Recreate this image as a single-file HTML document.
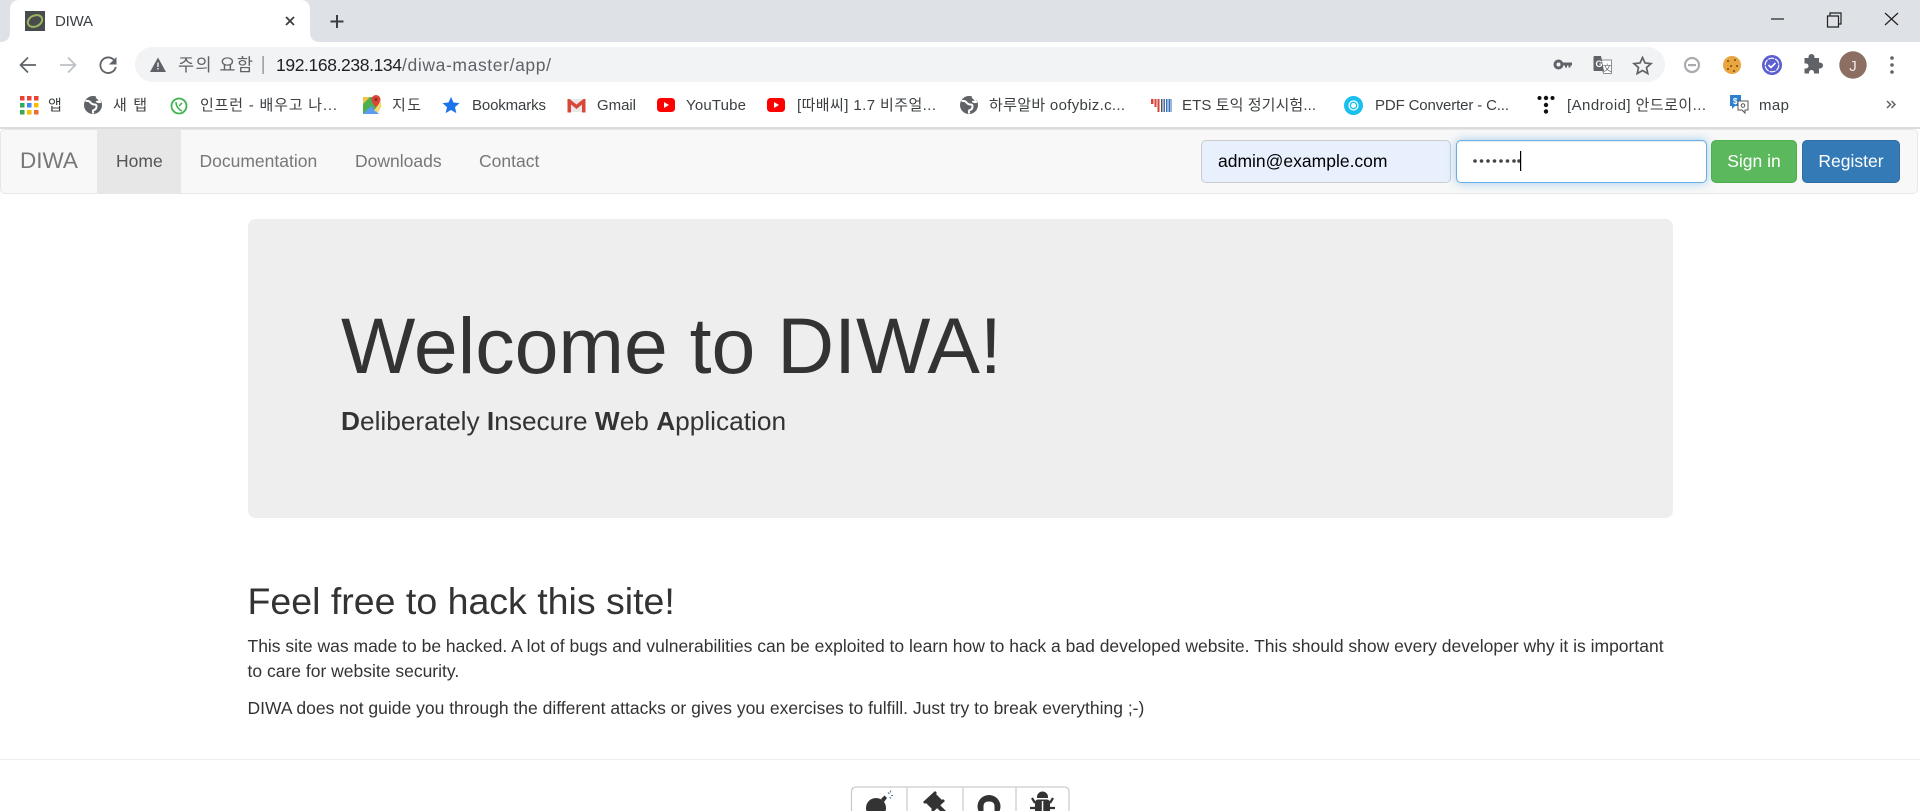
<!DOCTYPE html>
<html lang="ko"><head><meta charset="utf-8"><title>DIWA</title>
<style>
html,body{margin:0;padding:0;width:1920px;height:811px;overflow:hidden;background:#fff}
body{font-family:"Liberation Sans","Noto Sans CJK KR",sans-serif;color:#333;position:relative}
.a{position:absolute;white-space:nowrap}
svg{position:absolute;left:0;top:0}
svg text{font-family:"Liberation Sans","Noto Sans CJK KR",sans-serif}
#nav{left:0;top:129px;width:1916px;height:63px;background:#f8f8f8;border:1px solid #e7e7e7;border-radius:5px}
.n{font-size:17.5px;color:#777;line-height:20px;top:151px}
.in{box-sizing:border-box;height:43px;top:140px;border:1px solid #ccc;border-radius:5px;font-size:17.5px;color:#000;line-height:41px}
.btn{box-sizing:border-box;height:43px;top:140px;border-radius:5px;color:#fff;font-size:17.5px;line-height:41px;text-align:center}
.p{font-size:17.5px;line-height:25px;left:247.5px;width:1425px}
</style></head><body>

<svg width="1920" height="129" viewBox="0 0 1920 129">
<rect width="1920" height="42" fill="#dee1e6"/>
<rect y="42" width="1920" height="85" fill="#fff"/>
<rect y="127" width="1920" height="2" fill="#dcdcdc"/>
<path d="M0 42Q10 42 10 32V10Q10 0 20 0H300Q310 0 310 10V32Q310 42 320 42Z" fill="#fff"/>
<rect x="25" y="11" width="20" height="20" fill="#474b4d"/>
<ellipse cx="35" cy="21" rx="7.5" ry="5.5" fill="none" stroke="#9db45f" stroke-width="2" transform="rotate(-25 35 21)"/>
<text x="55" y="26" font-size="15" fill="#3c4043" textLength="38">DIWA</text>
<path d="M286 17l8 8m0-8l-8 8" stroke="#3c4043" stroke-width="1.800" fill="none"/>
<path d="M337 15v13M330.500 21.500h13" stroke="#3c4043" stroke-width="2" fill="none"/>
<path d="M1771 19h13" stroke="#222" stroke-width="1.2"/>
<path d="M1827.500 16h11v11h-11zM1830 16v-3h11v11h-2.500" stroke="#222" stroke-width="1.200" fill="none"/>
<path d="M1885 13l13 12m0-12l-13 12" stroke="#222" stroke-width="1.200" fill="none"/>

<!-- toolbar -->
<path d="M36 65H21M28 57.500l-7.500 7.500 7.500 7.500" stroke="#5f6368" stroke-width="1.700" fill="none"/>
<path d="M75.500 65H60M68 57.500l7.500 7.500-7.500 7.500" stroke="#bdc1c6" stroke-width="1.700" fill="none"/>
<path d="M114 60a7.800 7.800 0 1 0 1.800 7" stroke="#5f6368" stroke-width="1.800" fill="none"/>
<path d="M116.500 57v7.500h-7.500z" fill="#5f6368"/>
<rect x="135" y="47" width="1530" height="35" rx="17.500" fill="#f1f3f4"/>
<path d="M158 57.500l8 14.500h-16z" fill="#5f6368"/><rect x="157.300" y="62.500" width="1.400" height="4.500" fill="#f1f3f4"/><rect x="157.300" y="68" width="1.400" height="1.500" fill="#f1f3f4"/>
<text x="178" y="71" font-size="17.500" fill="#5f6368" textLength="75">주의 요함</text>
<rect x="262.500" y="56" width="1.200" height="18" fill="#80868b"/>
<text x="276" y="71" font-size="17.500" fill="#202124" textLength="126">192.168.238.134</text>
<text x="402" y="71" font-size="17.500" fill="#5f6368" textLength="149">/diwa-master/app/</text>
<!-- key -->
<circle cx="1558.500" cy="64.500" r="3.500" fill="none" stroke="#5f6368" stroke-width="3"/><path d="M1562 62.500h10v3h-1.500v2h-2v-2h-1.500v2h-2v-2h-3z" fill="#5f6368"/>
<!-- translate -->
<path d="M1600 60h11.500v13.500h-8z" fill="#fff" stroke="#8a8d91"/>
<path d="M1594.500 56q-1 0-1 1v13q0 1 1 1h9.500l-3-15z" fill="#5f6368"/>
<text x="1595.500" y="67" font-size="9" font-weight="bold" fill="#fff">G</text>
<text x="1603" y="71" font-size="8.500" fill="#5f6368">文</text>
<!-- star -->
<path d="M1642.500 57.500l2.500 5.500 6 .6-4.500 4 1.300 6-5.300-3.100-5.300 3.100 1.300-6-4.500-4 6-.6z" fill="none" stroke="#5f6368" stroke-width="1.700"/>
<circle cx="1692" cy="65" r="7" fill="none" stroke="#a9abae" stroke-width="2.200"/><rect x="1688" y="64" width="8" height="2.200" fill="#a9abae"/>
<circle cx="1732" cy="65" r="9" fill="#e9a53e"/><g fill="#7a4a1c"><circle cx="1728" cy="61" r="1"/><circle cx="1735" cy="60" r="1"/><circle cx="1731" cy="66" r="1"/><circle cx="1737" cy="66" r="1"/><circle cx="1728" cy="69" r="1"/><circle cx="1734" cy="71" r="1"/></g>
<circle cx="1772" cy="65" r="10" fill="#5b5fd0"/><circle cx="1772" cy="65" r="6.800" fill="none" stroke="#fff" stroke-width="1.200" stroke-dasharray="6 1"/><path d="M1768.500 65l2.500 2.500 4.500-4.500" stroke="#fff" stroke-width="1.600" fill="none"/>
<path d="M1805 60h4v-1a3 3 0 0 1 6 0v1h4.500v4.500h1a3 3 0 0 1 0 6h-1v5h-5v-1a2.500 2.500 0 0 0-5 0v1H1805v-5h1.500a2.500 2.500 0 0 0 0-5H1805z" fill="#5f6368" transform="translate(-.5 -2)"/>
<circle cx="1853" cy="65" r="13.700" fill="#8d6e63"/><text x="1853" y="71" font-size="15" fill="#f3e9e4" text-anchor="middle">J</text>
<g fill="#5f6368"><circle cx="1892" cy="58" r="1.800"/><circle cx="1892" cy="65" r="1.800"/><circle cx="1892" cy="72" r="1.800"/></g>

<!-- bookmark bar -->
<g>
<rect x="20" y="96" width="4.500" height="4.500" fill="#ea4335"/><rect x="27" y="96" width="4.500" height="4.500" fill="#ea4335"/><rect x="34" y="96" width="4.500" height="4.500" fill="#ea4335"/>
<rect x="20" y="103" width="4.500" height="4.500" fill="#34a853"/><rect x="27" y="103" width="4.500" height="4.500" fill="#4285f4"/><rect x="34" y="103" width="4.500" height="4.500" fill="#fbbc04"/>
<rect x="20" y="110" width="4.500" height="4.500" fill="#34a853"/><rect x="27" y="110" width="4.500" height="4.500" fill="#fbbc04"/><rect x="34" y="110" width="4.500" height="4.500" fill="#ea6d35"/>
</g>
<text x="48" y="110" font-size="15" fill="#3c4043" textLength="14">앱</text>
<g id="gl"><circle cx="93" cy="105" r="9" fill="#5f6368"/><path d="M85.500 101q3.500-.5 5 1.500t4 2 2 2.500-2.500 3-.5 3.500M96 97q3 1 4 5-2.500.5-3.500-1" stroke="#fff" stroke-width="2" fill="none"/></g>
<text x="113" y="110" font-size="15" fill="#3c4043" textLength="34">새 탭</text>
<circle cx="179" cy="106" r="7.500" fill="none" stroke="#3fb34f" stroke-width="1.800"/><path d="M176 102q0 6 6 9M179 106l3-3" stroke="#3fb34f" stroke-width="1.500" fill="none"/>
<text x="200" y="110" font-size="15" fill="#3c4043" textLength="137">인프런 - 배우고 나...</text>
<path d="M363 97h13l5 6-6 11h-12z" fill="#4caf50"/><path d="M363 114l8-8 8 8z" fill="#5c9cf0"/><path d="M363 97h7l-7 7z" fill="#f4c542"/><path d="M374 111l6-10 1.500 5-3 6z" fill="#f6d96b"/>
<path d="M376 95a4.500 4.500 0 0 1 4.500 4.500c0 3-4.500 8-4.500 8s-4.500-5-4.500-8A4.500 4.500 0 0 1 376 95z" fill="#db4437"/><circle cx="376" cy="99.500" r="1.500" fill="#8c2a20"/>
<text x="392" y="110" font-size="15" fill="#3c4043" textLength="29">지도</text>
<path d="M451 97l2.500 5.500 6 .6-4.500 4 1.300 6-5.300-3.100-5.300 3.100 1.300-6-4.500-4 6-.6z" fill="#1a73e8"/>
<text x="472" y="110" font-size="15" fill="#3c4043" textLength="74">Bookmarks</text>
<rect x="568" y="99" width="17" height="13" fill="#e8e8e8"/>
<path d="M567.500 99v13.500h3.500v-8l5.500 4.500 5.500-4.500v8h3.500V99h-2l-7 5.500-7-5.500z" fill="#d9473b"/>
<text x="597" y="110" font-size="15" fill="#3c4043" textLength="39">Gmail</text>
<rect x="657" y="98" width="18" height="14" rx="3.500" fill="#f00"/><path d="M664 102v6l5-3z" fill="#fff"/>
<text x="686" y="110" font-size="15" fill="#3c4043" textLength="60">YouTube</text>
<rect x="767" y="98" width="18" height="14" rx="3.500" fill="#f00"/><path d="M774 102v6l5-3z" fill="#fff"/>
<text x="797" y="110" font-size="15" fill="#3c4043" textLength="139">[따배씨] 1.7 비주얼...</text>
<use href="#gl" x="876"/>
<text x="989" y="110" font-size="15" fill="#3c4043" textLength="136">하루알바 oofybiz.c...</text>
<g fill="#d8403a"><rect x="1151" y="99" width="2.500" height="5"/><rect x="1154.500" y="99" width="2" height="8"/><rect x="1157.500" y="99" width="2" height="13"/><rect x="1161" y="99" width="1.500" height="13" fill="#555"/></g>
<g fill="#3b6fb5"><rect x="1163.500" y="99" width="1.500" height="13"/><rect x="1166" y="99" width="1.500" height="13"/><rect x="1168.500" y="99" width="1.500" height="13"/><rect x="1170.500" y="99" width="1" height="13"/></g>
<text x="1182" y="110" font-size="15" fill="#3c4043" textLength="134">ETS 토익 정기시험...</text>
<circle cx="1353.500" cy="105.500" r="7.300" fill="#fff" stroke="#19c0ef" stroke-width="4.400"/>
<circle cx="1353.500" cy="105.500" r="3.200" fill="none" stroke="#19c0ef" stroke-width="1.300"/>
<text x="1375" y="110" font-size="15" fill="#3c4043" textLength="134">PDF Converter - C...</text>
<g fill="#111"><circle cx="1539.500" cy="98" r="2"/><circle cx="1546" cy="98" r="2.200"/><circle cx="1552.500" cy="98" r="2"/><circle cx="1546" cy="105" r="2.200"/><circle cx="1546" cy="111.500" r="2.200"/></g>
<text x="1567" y="110" font-size="15" fill="#3c4043" textLength="139">[Android] 안드로이...</text>
<path d="M1730 95h11v11h-6l-3 3v-3h-2z" fill="#2f80ce"/><text x="1733" y="104" font-size="8" font-weight="bold" fill="#fff">$</text>
<path d="M1738 101h10v9h-3v3l-3-3h-4z" fill="#fff" stroke="#555" stroke-width="1"/><circle cx="1743" cy="105.500" r="1.800" fill="none" stroke="#555"/>
<text x="1759" y="110" font-size="15" fill="#3c4043" textLength="30">map</text>
<path d="M1887 101l3.500 3.500-3.500 3.500M1891.500 101l3.500 3.500-3.500 3.500" stroke="#5f6368" stroke-width="1.500" fill="none"/>
</svg>

<div id="nav" class="a"></div>
<div class="a" style="left:97px;top:130px;width:84px;height:63px;background:#e7e7e7"></div>
<div class="a" style="left:20px;top:148px;font-size:22.500px;line-height:26px;color:#777">DIWA</div>
<div class="a n" style="left:116px;color:#555">Home</div>
<div class="a n" style="left:199.500px">Documentation</div>
<div class="a n" style="left:355px">Downloads</div>
<div class="a n" style="left:479px">Contact</div>
<div class="a in" style="left:1201px;width:250px;background:#e8f0fe;padding-left:16px">admin@example.com</div>
<div class="a in" style="left:1456px;width:251px;background:#fff;border-color:#66afe9;box-shadow:0 0 10px rgba(102,175,233,.6),inset 0 1px 1px rgba(0,0,0,.075)"></div>
<svg width="1920" height="200" style="pointer-events:none"><g fill="#444"><circle cx="1475" cy="161" r="1.800"/><circle cx="1481.500" cy="161" r="1.800"/><circle cx="1488" cy="161" r="1.800"/><circle cx="1494.500" cy="161" r="1.800"/><circle cx="1501" cy="161" r="1.800"/><circle cx="1507.500" cy="161" r="1.800"/><circle cx="1514" cy="161" r="1.800"/><circle cx="1519" cy="161" r="1.800"/></g><rect x="1520" y="151" width="1.200" height="20" fill="#000"/></svg>
<div class="a btn" style="left:1711px;width:86px;background:#5cb85c;border:1px solid #4cae4c">Sign in</div>
<div class="a btn" style="left:1802px;width:98px;background:#337ab7;border:1px solid #2e6da4">Register</div>

<div class="a" style="left:247.500px;top:219px;width:1425px;height:299px;background:#eee;border-radius:7.500px"></div>
<div class="a" style="left:341px;top:301px;font-size:78.750px;line-height:90px;color:#333">Welcome to DIWA!</div>
<div class="a" style="left:341px;top:404px;font-size:26.250px;line-height:34px;color:#333"><b>D</b>eliberately <b>I</b>nsecure <b>W</b>eb <b>A</b>pplication</div>
<div class="a" style="left:247.500px;top:579px;font-size:37.500px;line-height:44px;color:#333">Feel free to hack this site!</div>
<div class="a p" style="top:634px;white-space:normal">This site was made to be hacked. A lot of bugs and vulnerabilities can be exploited to learn how to hack a bad developed website. This should show every developer why it is important to care for website security.</div>
<div class="a p" style="top:696px">DIWA does not guide you through the different attacks or gives you exercises to fulfill. Just try to break everything ;-)</div>
<div class="a" style="left:0;top:759px;width:1920px;height:1px;background:#eee"></div>

<svg width="1920" height="811" viewBox="0 0 1920 811">
<path d="M851.500 811V792q0-5 5-5H1064q5 0 5 5V811" fill="#fff" stroke="#ccc" stroke-width="1.250"/>
<path d="M907 787V811M963 787V811M1016 787V811" stroke="#ccc" stroke-width="1.250"/>
<circle cx="876" cy="808" r="10" fill="#333"/>
<path d="M881 799l3 3 3-4-2.500-2.500z" fill="#333"/>
<path d="M889.500 794l-1.500-1.500M891 795.500h2M889.500 797l1.500 1.500M890 792.500l1-2" stroke="#5a7a9a" stroke-width="1"/>
<path d="M923 802l12-11 2 2-1 1 6 6 1-1 2 2-12 11-2-2 1-1-6-6-1 1z" fill="#333"/><path d="M935 806l3-3 9 9-3 3z" fill="#333"/>
<circle cx="989" cy="806.500" r="11.500" fill="#333"/>
<path d="M983.500 811v-5q0-4.500 5.500-4.500t5.500 4.500v5z" fill="#fff"/>
<path d="M1037 798v-1a5.500 5.500 0 0 1 11 0v1z" fill="#333"/><rect x="1035" y="799.500" width="15" height="14" rx="3" fill="#333"/><rect x="1041.800" y="801" width="1.500" height="12" fill="#fff"/>
<path d="M1035 803l-3-5M1050 803l3-5M1035 808h-5M1050 808h5" stroke="#333" stroke-width="2.200" fill="none"/>
</svg>
</body></html>
